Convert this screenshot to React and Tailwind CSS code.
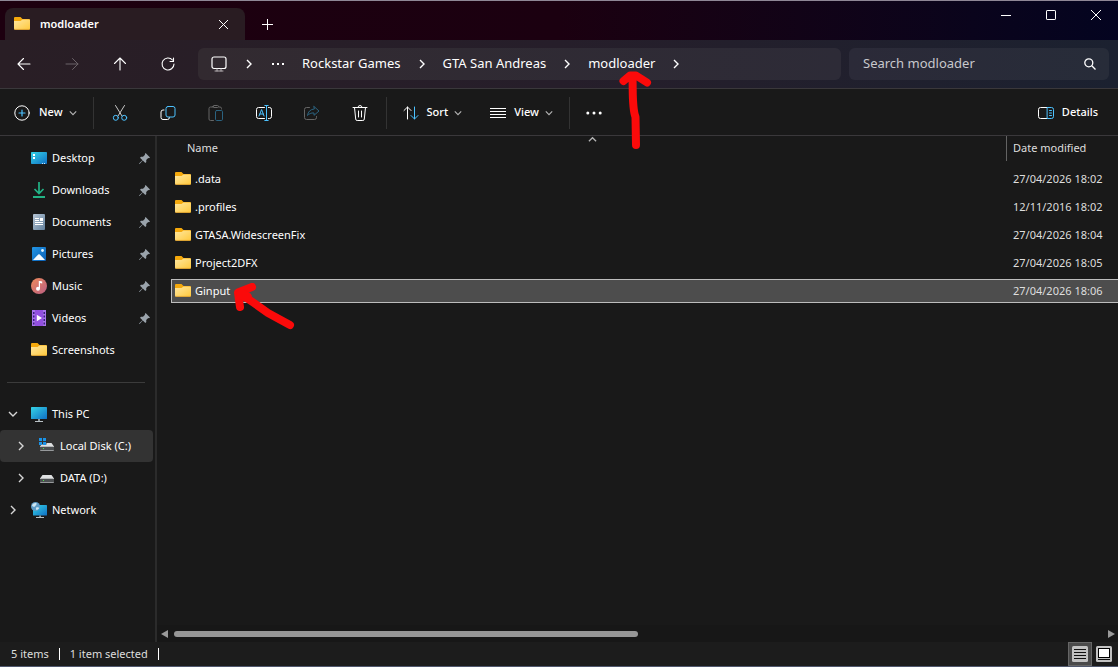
import React, { useState } from "react";

const Folder = () => (
  <svg width="16" height="16" viewBox="0 0 16 16" className="shrink-0">
    <defs>
      <linearGradient id="folderFront" x1="0" y1="0" x2="1" y2="1">
        <stop offset="0" stopColor="#ffe7a0" />
        <stop offset="1" stopColor="#ffc93c" />
      </linearGradient>
    </defs>
    <path d="M0 2a1 1 0 0 1 1-1h5.500l2 2H15a1 1 0 0 1 1 1v5H0z" fill="#f5a90c" />
    <path d="M0 5h6.500L8.500 3.600H15a1 1 0 0 1 1 1V12.600a1.200 1.200 0 0 1-1.200 1.200H1.200A1.200 1.200 0 0 1 0 12.600z" fill="url(#folderFront)" />
    <path d="M.4 13.400h15.200" stroke="#e9a52a" strokeWidth=".7" />
  </svg>
);

const Monitor = () => (
  <svg width="16" height="16" viewBox="0 0 16 16" className="shrink-0">
    <defs>
      <linearGradient id="screen" x1="0" y1="0" x2="1" y2="1">
        <stop offset="0" stopColor="#35d3e6" />
        <stop offset="1" stopColor="#0f6fc4" />
      </linearGradient>
    </defs>
    <rect y="1" width="16" height="12" rx=".6" fill="url(#screen)" />
    <path d="M7 13h2v2H7z" fill="#8d979c" />
    <path d="M4 15h8v1H4z" fill="#b9c1c5" />
  </svg>
);

const Desktop = () => (
  <svg width="16" height="16" viewBox="0 0 16 16" className="shrink-0">
    <rect y="2" width="16" height="12" rx=".8" fill="url(#screen)" />
    <path d="M2 4h2v2H2zM2 7h2v2H2z" fill="#fff" />
    <path d="M11 13.500h1M13 13.500h1" stroke="#c8e6fa" />
  </svg>
);

const Downloads = () => (
  <svg width="16" height="16" viewBox="0 0 16 16" fill="none" className="shrink-0">
    <path d="M8 0v11M3.500 7 8 11.500 12.500 7" stroke="#22b487" strokeWidth="1.700" />
    <path d="M2 15h12" stroke="#25c592" strokeWidth="1.800" />
  </svg>
);

const Documents = () => (
  <svg width="16" height="16" viewBox="0 0 16 16" className="shrink-0">
    <defs>
      <linearGradient id="paper" x1="0" y1="0" x2="1" y2="1">
        <stop offset="0" stopColor="#b6c6d6" />
        <stop offset="1" stopColor="#62809c" />
      </linearGradient>
    </defs>
    <rect x="2" width="12" height="16" rx="1" fill="url(#paper)" />
    <path d="M4 4.500h4M4 6.500h4M4 8.500h8M4 10.500h8" stroke="#fff" />
    <path d="M9 4h3v3H9z" fill="#fff" />
  </svg>
);

const Pictures = () => (
  <svg width="16" height="16" viewBox="0 0 16 16" className="shrink-0">
    <defs>
      <linearGradient id="sky" x1="0" y1="0" x2="1" y2="1">
        <stop offset="0" stopColor="#2296e6" />
        <stop offset="1" stopColor="#0a5fb4" />
      </linearGradient>
    </defs>
    <rect x="1" y="1" width="14" height="14" rx="1" fill="url(#sky)" />
    <path d="M2 14 7.200 8.600a1.200 1.200 0 0 1 1.600 0L14 14z" fill="#f5fbff" />
    <circle cx="11.500" cy="4.500" r="1.400" fill="#e5f5ff" />
  </svg>
);

const Music = () => (
  <svg width="16" height="16" viewBox="0 0 16 16" className="shrink-0">
    <defs>
      <linearGradient id="disc" x1="0" y1="0" x2="1" y2="1">
        <stop offset="0" stopColor="#f08c5a" />
        <stop offset="1" stopColor="#b95d83" />
      </linearGradient>
    </defs>
    <circle cx="8" cy="8" r="8" fill="url(#disc)" />
    <circle cx="7" cy="10.800" r="2" fill="#fff" />
    <path d="M7.800 3h1l2.400.6v2l-2.200-.5v5.700H7.800z" fill="#fff" />
  </svg>
);

const Videos = () => (
  <svg width="16" height="16" viewBox="0 0 16 16" className="shrink-0">
    <rect x="1" width="14" height="16" rx="1" fill="#9350e0" />
    <path d="M1 0h3v16H1zM12 0h3v16h-3z" fill="#a874ec" />
    <path d="M2 2h1.500v2H2zm0 3.500h1.500v2H2zm0 3.500h1.500v2H2zm0 3.500h1.500v2H2zM12.500 2H14v2h-1.500zm0 3.500H14v2h-1.500zm0 3.500H14v2h-1.500zm0 3.500H14v2h-1.500z" fill="#3d1d80" />
    <path d="M5.800 4.800v6.400L11 8z" fill="#fff" />
  </svg>
);

const Drive = ({ system }) => (
  <svg width="16" height="16" viewBox="0 0 16 16" className="shrink-0">
    <path d="M3.500 5h9L15 8.500H1z" fill="#dfe1e2" />
    <rect x="1" y="8" width="14" height="5" rx=".6" fill="#4c4f51" />
    <path d="M1 8.500h14" stroke="#b6b8b9" />
    <path d="M1.300 12.500h13.400" stroke="#96999b" />
    <path d="M4 10h1v1H4z" fill="#52e04f" />
    {system && (
      <>
        <path d="M0 0h7.500v6.500H0z" fill="#333" />
        <path d="M0 0h3v3H0zM4 0h3v3H4zM0 4h3v3H0zM4 4h3v3H4z" fill="#1b93e6" />
      </>
    )}
  </svg>
);

const Network = () => (
  <svg width="16" height="16" viewBox="0 0 16 16" className="shrink-0">
    <rect x="2" y="3" width="14" height="10.500" rx=".6" fill="url(#screen)" />
    <path d="M8.200 13.500h1.800V15H8.200z" fill="#8d979c" />
    <path d="M5 15h8v1H5z" fill="#b9c1c5" />
    <circle cx="4.500" cy="4.500" r="4.500" fill="#5f9dc8" />
    <path d="M1 3.200C2 1.500 4 .6 5.500 1.200 6 2.800 4.500 3.500 4 4.600 2.800 5.200 1.600 4.600 1 3.200zM5.200 5.500c1.200-.6 2.600-.4 3 .4-.5 1-1.400 1.900-2.600 2.300-.7-.8-.9-1.800-.4-2.700z" fill="#cfe6f2" />
  </svg>
);

const Pin = () => (
  <svg width="11" height="11" viewBox="0 0 11 11" className="shrink-0">
    <path d="M6.600 0 11 4.400l-1 .8-.8-.1-2 2 .1 2-1 1L3.800 7.500.6 11 0 10.400 3.500 7.200 1 4.700l1-1 2 .1 2-2-.1-.9z" fill="#9aa3ab" />
  </svg>
);

const Chevron = ({ dir = "right", size = 10, className = "" }) => {
  const paths = {
    right: "M3 1l4 4-4 4",
    down: "M1 3l4 4 4-4",
    up: "M1 7l4-4 4 4",
  };
  return (
    <svg
      width={size}
      height={size}
      viewBox="0 0 10 10"
      fill="none"
      stroke="currentColor"
      strokeWidth="1.400"
      className={`shrink-0 ${className}`}
    >
      <path d={paths[dir]} />
    </svg>
  );
};

// Wrapper for the thin line icons used in the nav bar and toolbar
const Line = ({ children, size = 16 }) => (
  <svg
    width={size}
    height={size}
    viewBox="0 0 16 16"
    fill="none"
    stroke="currentColor"
    strokeLinecap="round"
    strokeLinejoin="round"
    className="shrink-0"
  >
    {children}
  </svg>
);

const Dots = () => (
  <svg width="16" height="4" viewBox="0 0 16 4" fill="currentColor" className="shrink-0">
    <circle cx="1.800" cy="2" r="1.500" />
    <circle cx="8" cy="2" r="1.500" />
    <circle cx="14.200" cy="2" r="1.500" />
  </svg>
);

const BLUE = "#4cc2ff";

const navButtons = [
  { label: "Back", icon: <path d="M14 8H2M7.500 2.500 2 8l5.500 5.500" strokeWidth="1.100" /> },
  { label: "Forward", disabled: true, icon: <path d="M2 8h12M8.500 2.500 14 8l-5.500 5.500" /> },
  { label: "Up", icon: <path d="M8 14V2M2.500 7.500 8 2l5.500 5.500" strokeWidth="1.100" /> },
  {
    label: "Refresh",
    icon: <path d="M12.500 4A6 6 0 1 0 14 8M13.500 2v3.500H10" strokeWidth="1.100" />,
  },
];

const toolButtons = [
  {
    label: "Cut",
    icon: (
      <>
        <path d="M3.500.5 10 11M12.500.5 6 11" stroke="#c9c9c9" />
        <circle cx="3.800" cy="12.800" r="2.500" stroke={BLUE} />
        <circle cx="12.200" cy="12.800" r="2.500" stroke={BLUE} />
      </>
    ),
  },
  {
    label: "Copy",
    icon: (
      <>
        <path d="M4 5H3a2 2 0 0 0-2 2v5.500a2 2 0 0 0 2 2h4.500a2 2 0 0 0 2-2" />
        <rect x="6" y="1.500" width="9" height="10.500" rx="2" stroke={BLUE} />
      </>
    ),
  },
  {
    label: "Paste",
    disabled: true,
    icon: (
      <>
        <path d="M5 2H2.500a1.500 1.500 0 0 0-1.500 1.500v10.500A1.500 1.500 0 0 0 2.500 15.500H5.500M11 2h1a1.500 1.500 0 0 1 1.500 1.500V4M5 1.500A1 1 0 0 1 6 .5h3.500a1 1 0 0 1 0 2H6a1 1 0 0 1-1-1z" stroke="#666" />
        <rect x="7.500" y="5.500" width="7" height="10" rx="1.200" stroke="#2b6380" />
      </>
    ),
  },
  {
    label: "Rename",
    icon: (
      <>
        <path d="M8.500 2.500H2.500a2 2 0 0 0-2 2v7a2 2 0 0 0 2 2h6M12.500 2.500h1a2 2 0 0 1 2 2v7a2 2 0 0 1-2 2h-1" />
        <path d="M10.500.5v15M8.800.5h3.400M8.800 15.500h3.400M3 11l2.600-6.500L8 11M4 9h3.300" stroke={BLUE} />
      </>
    ),
  },
  {
    label: "Share",
    disabled: true,
    icon: (
      <>
        <path d="M5.500 2.500h-3a2 2 0 0 0-2 2v8a2 2 0 0 0 2 2h8a2 2 0 0 0 2-2v-1" stroke="#666" />
        <path d="M10 1.500 15 6l-5 4.300V8C7 7.600 5 9 3.500 10.500 4 6.800 6.300 4.300 10 4z" stroke="#2b6380" />
      </>
    ),
  },
  {
    label: "Delete",
    icon: <path d="M1 2.500h14M6 2.500a2 2 0 0 1 4 0M2.500 2.500l1.200 11.500a1.500 1.500 0 0 0 1.500 1.500h5.600a1.500 1.500 0 0 0 1.500-1.500L13.500 2.500M6.500 6v6M9.500 6v6" />,
  },
];

const quickAccess = [
  { name: "Desktop", icon: <Desktop />, pinned: true },
  { name: "Downloads", icon: <Downloads />, pinned: true },
  { name: "Documents", icon: <Documents />, pinned: true },
  { name: "Pictures", icon: <Pictures />, pinned: true },
  { name: "Music", icon: <Music />, pinned: true },
  { name: "Videos", icon: <Videos />, pinned: true },
  { name: "Screenshots", icon: <Folder /> },
];

const tree = [
  { name: "This PC", icon: <Monitor />, dir: "down" },
  { name: "Local Disk (C:)", icon: <Drive system />, nested: true, active: true },
  { name: "DATA (D:)", icon: <Drive />, nested: true },
  { name: "Network", icon: <Network /> },
];

const files = [
  { name: ".data", date: "27/04/2026 18:02" },
  { name: ".profiles", date: "12/11/2016 18:02" },
  { name: "GTASA.WidescreenFix", date: "27/04/2026 18:04" },
  { name: "Project2DFX", date: "27/04/2026 18:05" },
  { name: "Ginput", date: "27/04/2026 18:06" },
];

const Divider = () => <span className="h-8 w-px bg-[#333333]" />;

const TitleBar = () => (
  <header className="flex h-10 items-end border-t border-[#8f8796] bg-linear-to-r from-[#1d000f] via-[#1b0010] to-[#040420] pl-[5px]">
    <div className="flex h-8 w-60 items-center rounded-t-lg bg-[#291c22] pr-3 pl-[9px]">
      <Folder />
      <span className="ml-[10px] flex-1 font-semibold">modloader</span>
      <button aria-label="Close tab" className="flex size-5 items-center justify-center">
        <svg width="9" height="9" stroke="currentColor">
          <path d="M0 0l9 9M9 0 0 9" />
        </svg>
      </button>
    </div>
    <button aria-label="New tab" className="ml-[6px] flex size-8 items-center justify-center">
      <svg width="11" height="11" stroke="currentColor">
        <path d="M5.500 0v11M0 5.500h11" />
      </svg>
    </button>
    <div className="ml-auto flex self-start">
      <button aria-label="Minimize" className="flex h-7 w-[45px] items-center justify-center">
        <svg width="10" height="10" stroke="currentColor">
          <path d="M0 5.500h10" />
        </svg>
      </button>
      <button aria-label="Maximize" className="flex h-7 w-[45px] items-center justify-center">
        <svg width="10" height="10" fill="none" stroke="currentColor">
          <rect x=".5" y=".5" width="9" height="9" rx=".6" />
        </svg>
      </button>
      <button aria-label="Close" className="flex h-7 w-[45px] items-center justify-center">
        <svg width="10" height="10" stroke="currentColor">
          <path d="M0 0l10 10M10 0 0 10" />
        </svg>
      </button>
    </div>
  </header>
);

const AddressBar = () => {
  const [query, setQuery] = useState("");

  return (
    <div className="flex h-12 items-center bg-linear-to-r from-[#291e25] via-[#261e2a] to-[#1b2130] pr-[9px]">
      {navButtons.map((btn) => (
        <button
          key={btn.label}
          aria-label={btn.label}
          disabled={btn.disabled}
          className="flex h-8 w-12 items-center justify-center disabled:text-[#6b6368]"
        >
          <Line>{btn.icon}</Line>
        </button>
      ))}
      <nav
        aria-label="Path"
        className="ml-[6px] flex h-8 flex-1 items-center rounded-md bg-linear-to-r from-[#322a30] to-[#2d2b37] pl-[13px] text-[13px]"
      >
        <Line>
          <rect x="1" y="1" width="14" height="11.500" rx="2" strokeWidth="1.200" />
          <path d="M6 13v2M10 13v2M4 15h8" stroke="#b5b0b3" />
        </Line>
        <Chevron className="ml-[17px]" />
        <button aria-label="More folders" className="mx-[18px]">
          <svg width="12" height="3" fill="currentColor">
            <path d="M0 0h2v2H0zM5 0h2v2H5zM10 0h2v2h-2z" />
          </svg>
        </button>
        <a href="#rockstar">Rockstar Games</a>
        <Chevron className="mx-4" />
        <a href="#gta">GTA San Andreas</a>
        <Chevron className="mx-4" />
        <a href="#modloader" className="relative">
          modloader
          <RedArrowUp />
        </a>
        <Chevron className="mx-4" />
      </nav>
      <label className="ml-2 flex h-8 w-[260px] items-center rounded-md bg-linear-to-r from-[#2b2a38] to-[#272c39] pr-[13px] pl-[14px]">
        <input
          type="search"
          aria-label="Search modloader"
          placeholder="Search modloader"
          value={query}
          onChange={(e) => setQuery(e.target.value)}
          className="min-w-0 flex-1 bg-transparent text-[13px] outline-none placeholder:text-[#c8c8cc]"
        />
        <svg width="12" height="12" viewBox="0 0 12 12" fill="none" stroke="currentColor" strokeWidth="1.300">
          <circle cx="4.800" cy="4.800" r="4" />
          <path d="M7.800 7.800 11.500 11.500" />
        </svg>
      </label>
    </div>
  );
};

// Hand drawn markers
const RedArrowUp = () => (
  <svg
    width="36"
    height="84"
    viewBox="0 0 36 84"
    fill="none"
    stroke="#fb0a0a"
    strokeWidth="8"
    strokeLinecap="round"
    strokeLinejoin="round"
    className="pointer-events-none absolute top-4 left-7 z-10"
  >
    <path d="M20 75 19.500 47C16 38 17 24 16.500 6M7.500 11 14 5.500 20 5.500 31 12.500" />
  </svg>
);

const RedArrowLeft = () => (
  <svg
    width="66"
    height="52"
    viewBox="0 0 66 52"
    fill="none"
    stroke="#fb0a0a"
    strokeWidth="8"
    strokeLinecap="round"
    strokeLinejoin="round"
    className="pointer-events-none absolute top-0 left-full z-10"
  >
    <path d="M22 4 8 9.500l2 14.500M9 10 24 20 38 30 60 42" />
    <path d="M11 11 17 14" strokeWidth="10" />
  </svg>
);

const Toolbar = () => (
  <div className="flex h-12 items-center border-y border-[#3a383b] pt-px pr-5">
    <button className="flex items-center pr-4 pl-[14px] font-medium">
      <Line>
        <circle cx="8" cy="8" r="7.200" />
        <path d="M8 5v6M5 8h6" stroke={BLUE} strokeWidth="1.200" />
      </Line>
      <span className="ml-[9px]">New</span>
      <Chevron dir="down" size={8} className="ml-[6px] text-[#b5b5b5]" />
    </button>
    <Divider />
    <div className="mx-0.5 flex">
      {toolButtons.map((btn) => (
        <button
          key={btn.label}
          aria-label={btn.label}
          disabled={btn.disabled}
          className="flex h-8 w-12 items-center justify-center"
        >
          <Line>{btn.icon}</Line>
        </button>
      ))}
    </div>
    <Divider />
    <button className="flex items-center pl-4 font-medium">
      <Line>
        <path d="M4.500 14V2M1 5.500 4.500 2 8 5.500" />
        <path d="M11.500 2v12M8 10.500l3.500 3.500 3.500-3.500" stroke={BLUE} />
      </Line>
      <span className="ml-2">Sort</span>
      <Chevron dir="down" size={8} className="ml-[6px] text-[#b5b5b5]" />
    </button>
    <button className="flex items-center pr-4 pl-7 font-medium">
      <svg width="16" height="12" stroke="currentColor" className="shrink-0">
        <path d="M0 1.500h16M0 4.500h16M0 7.500h16M0 10.500h16" />
      </svg>
      <span className="ml-2">View</span>
      <Chevron dir="down" size={8} className="ml-[6px] text-[#b5b5b5]" />
    </button>
    <Divider />
    <button aria-label="See more" className="flex h-8 w-12 items-center justify-center">
      <Dots />
    </button>
    <button className="ml-auto flex items-center font-medium">
      <Line>
        <path d="M9 2.500H2.500a2 2 0 0 0-2 2v7a2 2 0 0 0 2 2H9" />
        <path d="M9.500 2.500h4a2 2 0 0 1 2 2v7a2 2 0 0 1-2 2h-4zM11.500 5.500h2M11.500 8h2M11.500 10.500h2" stroke={BLUE} />
      </Line>
      <span className="ml-2">Details</span>
    </button>
  </div>
);

const Sidebar = () => (
  <aside className="w-[157px] shrink-0 border-r-2 border-[#2b2b2b] pt-[6px] pr-[2px]">
    <ul>
      {quickAccess.map((item) => (
        <li key={item.name}>
          <a href={`#${item.name}`} className="flex h-8 items-center pr-[3px] pl-[31px]">
            {item.icon}
            <span className="ml-[5px] flex-1">{item.name}</span>
            {item.pinned && <Pin />}
          </a>
        </li>
      ))}
    </ul>
    <hr className="mt-4 mr-2 mb-[15px] ml-[7px] border-[#3b3b3b]" />
    <ul>
      {tree.map((item) => (
        <li key={item.name}>
          <a
            href={`#${item.name}`}
            className={`flex h-8 items-center whitespace-nowrap rounded-sm ${
              item.nested ? "pl-4" : "pl-2"
            } ${item.active ? "bg-[#333333]" : ""}`}
          >
            <Chevron dir={item.dir} className="text-[#d6d6d6]" />
            <span className="ml-[13px]">{item.icon}</span>
            <span className="ml-[5px]">{item.name}</span>
          </a>
        </li>
      ))}
    </ul>
  </aside>
);

const FileList = () => {
  const [selected, setSelected] = useState("Ginput");

  return (
    <div className="flex-1 pl-[14px]">
      <table className="w-full table-fixed border-collapse text-left">
        <thead>
          <tr className="h-[29px] align-top">
            <th className="relative p-0 font-normal">
              <div className="flex h-[25px] items-center pl-4 text-[#dedede]">Name</div>
              <div className="absolute right-0 left-2 top-0 flex justify-center">
                <Chevron dir="up" size={9} className="-mt-px text-[#b5b5b5]" />
              </div>
            </th>
            <th className="w-28 p-0 font-normal">
              <div className="flex h-[25px] items-center border-l border-[#636363] pl-[6px] text-[#dedede]">
                Date modified
              </div>
            </th>
          </tr>
        </thead>
        <tbody>
          {files.map((file) => {
            const active = file.name === selected;
            return (
              <tr key={file.name} onClick={() => setSelected(file.name)} className="h-7">
                <td className="p-0">
                  <div
                    className={`flex h-6 items-center border-y border-l pl-[3px] ${
                      active ? "border-[#bdbdbd] bg-[#4d4d4d]" : "border-transparent"
                    }`}
                  >
                    <Folder />
                    <span className="relative ml-1">
                      {file.name}
                      {file.name === "Ginput" && <RedArrowLeft />}
                    </span>
                  </div>
                </td>
                <td className="p-0">
                  <div
                    className={`flex h-6 items-center whitespace-nowrap border-y pl-[7px] text-[#dedede] ${
                      active ? "border-[#bdbdbd] bg-[#4d4d4d]" : "border-transparent"
                    }`}
                  >
                    {file.date}
                  </div>
                </td>
              </tr>
            );
          })}
        </tbody>
      </table>
    </div>
  );
};

const ScrollBar = () => (
  <div className="flex h-[17px] items-center bg-[#171717] pr-[3px] pl-1">
    <svg width="7" height="8" fill="#9a9a9a">
      <path d="M7 0v8L0 4z" />
    </svg>
    <div className="mx-[6px] flex-1">
      <div className="h-[6px] w-1/2 rounded-full bg-[#969696]" />
    </div>
    <svg width="7" height="8" fill="#9a9a9a">
      <path d="M0 0v8l7-4z" />
    </svg>
  </div>
);

const StatusBar = () => (
  <footer className="flex h-[25px] items-center border-b border-[#50586e] bg-[#1c1c1c] pr-[6px] pl-[11px] text-[#dedede]">
    <span>5 items</span>
    <span className="mx-[10px] h-3 w-px bg-white" />
    <span>1 item selected</span>
    <span className="mx-[10px] h-3 w-px bg-white" />
    <button
      aria-label="Details view"
      className="ml-auto flex h-full w-6 items-center justify-center border border-[#666] bg-[#4a4a4a]"
    >
      <svg width="16" height="16" className="shrink-0">
        <rect width="16" height="16" rx="1.500" fill="#c2c2c2" />
        <path d="M2 3.500h12M2 6.500h12M2 9.500h12M2 12.500h12" stroke="#111" />
      </svg>
    </button>
    <button aria-label="Large icons view" className="ml-1">
      <svg width="16" height="16" className="block">
        <rect width="16" height="16" rx="1.500" fill="#c2c2c2" />
        <rect x="2.500" y="2.500" width="11" height="9" fill="#fff" stroke="#000" />
        <path d="M2 13.500h12" stroke="#111" />
      </svg>
    </button>
  </footer>
);

const App = () => {
  return (
    <div className="flex min-h-screen flex-col bg-[#191919] font-['Noto_Sans','Open_Sans',sans-serif] text-[11px] text-white">
      <TitleBar />
      <AddressBar />
      <Toolbar />
      <main className="flex flex-1">
        <Sidebar />
        <section className="flex min-w-0 flex-1 flex-col">
          <FileList />
          <ScrollBar />
        </section>
      </main>
      <StatusBar />
    </div>
  );
};

export default App;
